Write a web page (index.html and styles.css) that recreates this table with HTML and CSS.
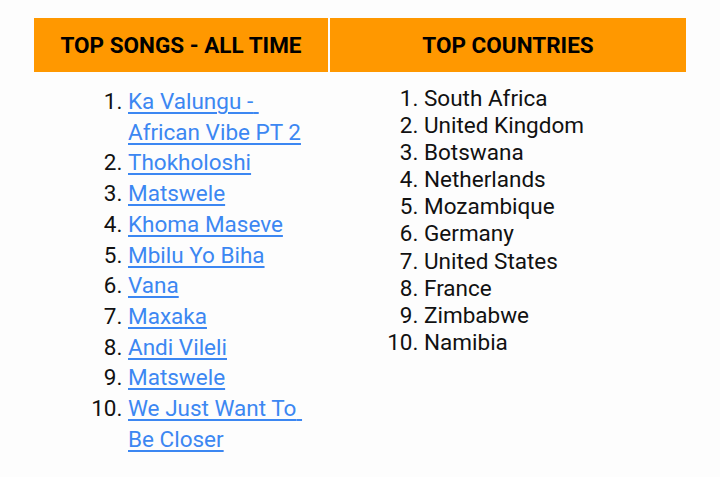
FILE: index.html
```html
<!DOCTYPE html>
<html lang="en">
<head>
    <meta charset="UTF-8">
    <meta name="viewport" content="width=device-width, initial-scale=1.0">
    <title>Top Charts</title>
    <link rel="stylesheet" href="styles.css">
</head>
<body>
    <div class="charts">
        <div class="head">TOP SONGS - ALL TIME</div>
        <div class="head">TOP COUNTRIES</div>
        <div class="cell">
            <ol class="songs">
                <li><a href="#">Ka Valungu - African Vibe PT 2</a></li>
                <li><a href="#">Thokholoshi</a></li>
                <li><a href="#">Matswele</a></li>
                <li><a href="#">Khoma Maseve</a></li>
                <li><a href="#">Mbilu Yo Biha</a></li>
                <li><a href="#">Vana</a></li>
                <li><a href="#">Maxaka</a></li>
                <li><a href="#">Andi Vileli</a></li>
                <li><a href="#">Matswele</a></li>
                <li><a href="#">We Just Want To Be Closer</a></li>
            </ol>
        </div>
        <div class="cell">
            <ol class="countries">
                <li>South Africa</li>
                <li>United Kingdom</li>
                <li>Botswana</li>
                <li>Netherlands</li>
                <li>Mozambique</li>
                <li>Germany</li>
                <li>United States</li>
                <li>France</li>
                <li>Zimbabwe</li>
                <li>Namibia</li>
            </ol>
        </div>
    </div>
</body>
</html>
```

FILE: styles.css
```css
body{
    margin: 0;
    background-color: #fdfdfd;
    font-family: Roboto, "Liberation Sans", sans-serif;
    color: #111;
}

.charts{
    display: grid;
    grid-template-columns: 294px 356px;
    column-gap: 2px;
    width: 652px;
    margin: 18px auto 0;
}

.head{
    height: 54px;
    display: flex;
    justify-content: center;
    align-items: center;
    background-color: #ff9800;
    color: #000;
    font-size: 22.5px;
    font-weight: bold;
}

.cell ol{
    margin: 0;
    padding-left: 94px;
    font-size: 22.5px;
}

.cell .songs{
    margin-top: 14px;
    width: 180px;
    line-height: 30.7px;
}

.cell .countries{
    margin-top: 13px;
    line-height: 27.1px;
}

.songs a{
    color: #3c87f2;
    white-space: pre-wrap;
    text-decoration-thickness: 2px;
    text-underline-offset: 3px;
}
```
